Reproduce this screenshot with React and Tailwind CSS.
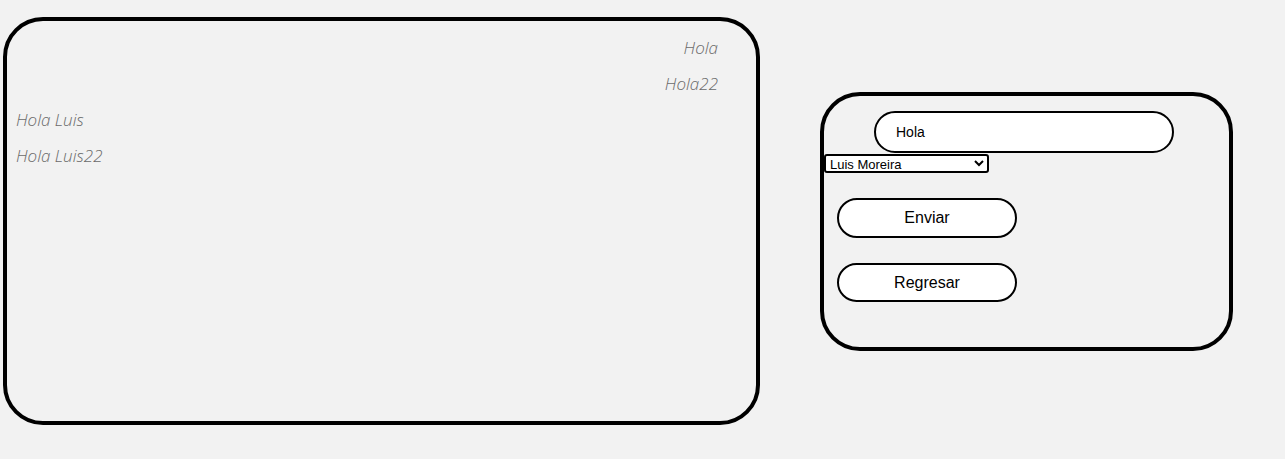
import { useState } from "react";

const messages = [
  { text: "Hola", mine: true },
  { text: "Hola22", mine: true },
  { text: "Hola Luis", mine: false },
  { text: "Hola Luis22", mine: false },
];

const ChatBox = () => (
  <div className="ml-[3px] mt-[17px] h-[408px] w-[757px] shrink-0 rounded-[40px] border-4 border-black pt-[14px] pl-[9px] pr-[38px]">
    <div className="flex flex-col">
      {messages.map((m, i) => (
        <p
          key={i}
          className={`h-[36px] leading-[26px] text-[17px] font-light italic text-[#6a6a6a] font-['Open_Sans','Noto_Sans',sans-serif] ${
            m.mine ? "text-right" : "text-left"
          }`}
        >
          {m.text}
        </p>
      ))}
    </div>
  </div>
);

const SendForm = () => {
  const [msg, setMsg] = useState("Hola");
  return (
    <div className="ml-[60px] mt-[92px] w-[413px] shrink-0 rounded-[40px] border-4 border-black pt-[15px] pb-[45px] font-['Liberation_Sans',Arial,sans-serif]">
      <input
        value={msg}
        onChange={(e) => setMsg(e.target.value)}
        className="ml-[50px] block h-[42px] w-[300px] rounded-full border-2 border-black bg-white px-5 text-[14px] text-black outline-none"
      />
      <select className="mt-px block h-[19px] w-[165px] rounded-[3px] border-2 border-black bg-white text-[13px] leading-none text-black">
        <option>Luis Moreira</option>
      </select>
      <div className="ml-[13px] mt-[25px] flex flex-col gap-[25px]">
        <button className="h-[40px] w-[180px] rounded-full border-2 border-black bg-white text-[16px] text-black">
          Enviar
        </button>
        <button className="h-[39px] w-[180px] rounded-full border-2 border-black bg-white text-[16px] text-black">
          Regresar
        </button>
      </div>
    </div>
  );
};

export default function App() {
  return (
    <div className="flex h-[459px] w-full items-start bg-[#f2f2f2]">
      <ChatBox />
      <SendForm />
    </div>
  );
}
